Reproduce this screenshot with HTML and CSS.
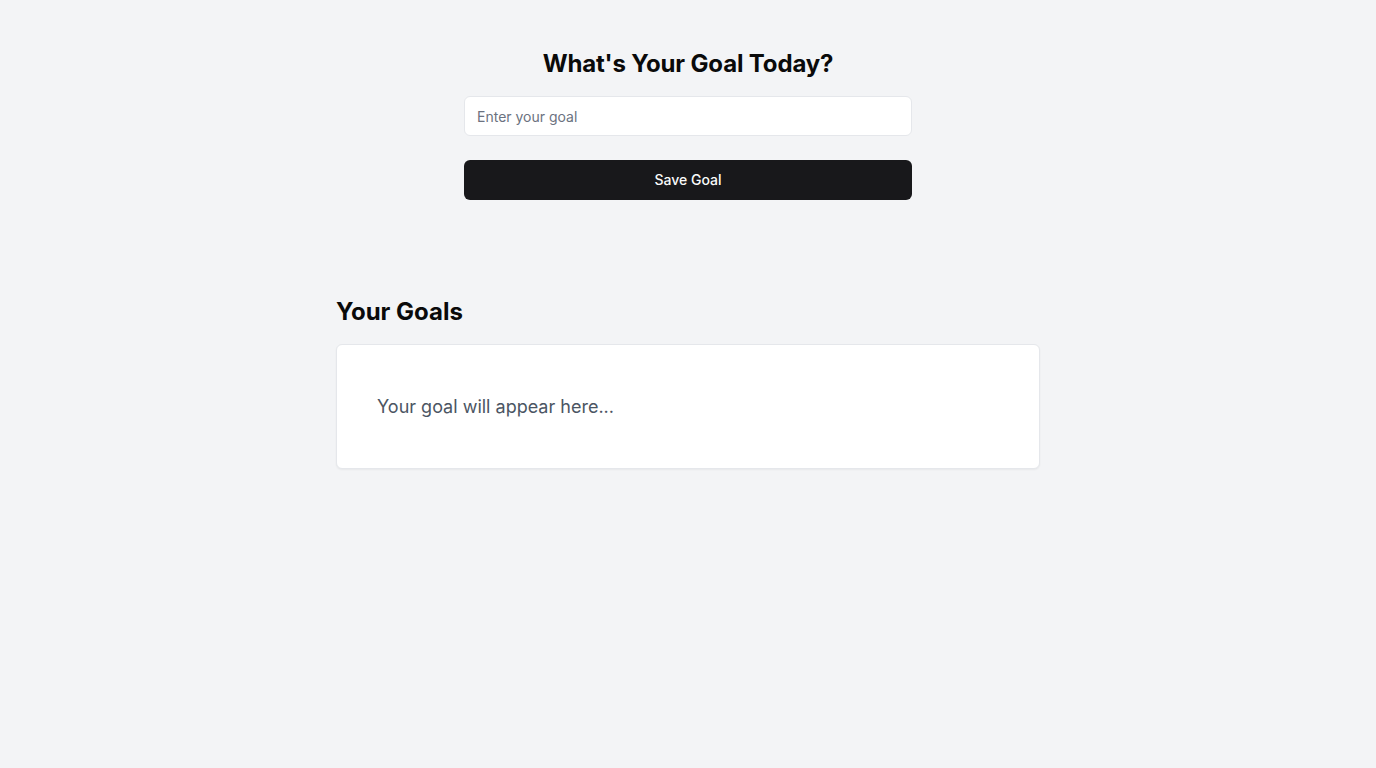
FILE: index.html
```html
<!DOCTYPE html>
<html lang="en">
<head>
<meta charset="utf-8">
<title>Goals</title>
<link rel="stylesheet" href="styles.css">
</head>
<body>
<main class="page">
  <section class="entry">
    <h1 class="entry-title">What's Your Goal Today?</h1>
    <input class="goal-input" type="text" placeholder="Enter your goal">
    <button class="save-btn" type="button">Save Goal</button>
  </section>
  <section class="goals">
    <h2 class="goals-title">Your Goals</h2>
    <div class="goal-card">
      <p class="goal-empty">Your goal will appear here...</p>
    </div>
  </section>
</main>
</body>
</html>
```

FILE: styles.css
```css
* { box-sizing: border-box; }
html, body { margin: 0; padding: 0; }
body {
  background: #f3f4f6;
  font-family: Inter, "Noto Sans", sans-serif;
  color: #0a0a0a;
  min-height: 768px;
}
.page {
  display: flex;
  flex-direction: column;
  align-items: center;
  padding-top: 48px;
}
.entry {
  width: 448px;
  display: flex;
  flex-direction: column;
  align-items: stretch;
}
.entry-title {
  margin: 0 0 16px;
  font-size: 24px;
  line-height: 32px;
  font-weight: 700;
  letter-spacing: -0.15px;
  text-align: center;
  color: #0a0a0a;
}
.goal-input {
  height: 40px;
  border: 1px solid #e5e7eb;
  border-radius: 6px;
  background: #fff;
  padding: 0 12px;
  font-family: inherit;
  font-size: 14px;
  color: #111827;
  outline: none;
}
.goal-input::placeholder { color: #6b7280; }
.save-btn {
  margin-top: 24px;
  height: 40px;
  border: none;
  border-radius: 6px;
  background: #18181b;
  color: #fafafa;
  font-family: inherit;
  font-size: 14px;
  font-weight: 500;
  padding: 0 16px 2px;
  cursor: pointer;
}
.goals {
  width: 704px;
  margin-top: 96px;
}
.goals-title {
  margin: 0 0 16px;
  font-size: 24px;
  line-height: 32px;
  font-weight: 700;
  color: #0a0a0a;
}
.goal-card {
  background: #fff;
  border: 1px solid #e5e7eb;
  border-radius: 6px;
  box-shadow: 0 1px 2px rgba(0,0,0,0.05);
  padding: 48px 40px 47px;
}
.goal-empty {
  margin: 0;
  font-size: 18px;
  line-height: 28px;
  color: #4b5563;
}
```
